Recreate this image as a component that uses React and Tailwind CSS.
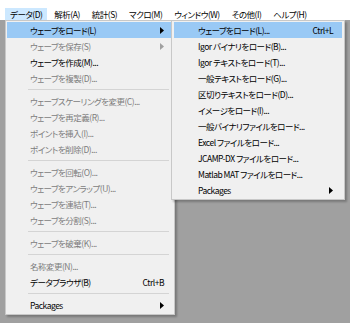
const topMenus = ['データ(D)', '解析(A)', '統計(S)', 'マクロ(M)', 'ウィンドウ(W)', 'その他(I)', 'ヘルプ(H)']

const dataMenu = [
  { label: 'ウェーブをロード(L)', arrow: true, active: true },
  { label: 'ウェーブを保存(S)', arrow: true, disabled: true },
  { label: 'ウェーブを作成(M)...' },
  { label: 'ウェーブを複製(D)...', disabled: true },
  'sep',
  { label: 'ウェーブスケーリングを変更(C)...', disabled: true },
  { label: 'ウェーブを再定義(R)...', disabled: true },
  { label: 'ポイントを挿入(I)...', disabled: true },
  { label: 'ポイントを削除(D)...', disabled: true },
  'sep',
  { label: 'ウェーブを回転(O)...', disabled: true },
  { label: 'ウェーブをアンラップ(U)...', disabled: true },
  { label: 'ウェーブを連結(T)...', disabled: true },
  { label: 'ウェーブを分割(S)...', disabled: true },
  'sep',
  { label: 'ウェーブを破棄(K)...', disabled: true },
  'sep',
  { label: '名称変更(N)...', disabled: true },
  { label: 'データブラウザ(B)', shortcut: 'Ctrl+B' },
  'sep',
  { label: 'Packages', arrow: true },
]

const loadMenu = [
  { label: 'ウェーブをロード(L)...', shortcut: 'Ctrl+L', active: true },
  { label: 'Igor バイナリをロード(B)...' },
  { label: 'Igor テキストをロード(T)...' },
  { label: '一般テキストをロード(G)...' },
  { label: '区切りテキストをロード(D)...' },
  { label: 'イメージをロード(I)...' },
  { label: '一般バイナリファイルをロード...' },
  { label: 'Excel ファイルをロード...' },
  { label: 'JCAMP-DX ファイルをロード...' },
  { label: 'Matlab MAT ファイルをロード...' },
  { label: 'Packages', arrow: true },
]

function Arrow({ disabled }) {
  return (
    <svg width="4" height="7" viewBox="0 0 4 7" className="shrink-0">
      <path d="M0 0 L4 3.5 L0 7 Z" fill={disabled ? '#a0a0a0' : '#000'} />
    </svg>
  )
}

function MenuList({ items, textPad, rightPad }) {
  return items.map((item, i) => {
    if (item === 'sep') {
      return (
        <div key={i} className="h-[7px] flex items-center pl-[21px] pr-[2px]">
          <div className="h-px w-full bg-[#d4d4d4]" />
        </div>
      )
    }
    return (
      <div
        key={i}
        className={`h-4 flex items-center ${item.active ? 'bg-[#99c9f5]' : ''} ${item.disabled ? 'text-[#7d7d7d]' : 'text-black'}`}
        style={{ paddingLeft: textPad, paddingRight: rightPad }}
      >
        <span className="flex-1 whitespace-nowrap">{item.label}</span>
        {item.shortcut && <span className="whitespace-nowrap">{item.shortcut}</span>}
        {item.arrow && <Arrow disabled={item.disabled} />}
      </div>
    )
  })
}

export default function App() {
  return (
    <div className="w-[350px] h-[323px] bg-[#a0a0a0] flex flex-col overflow-hidden font-['Noto_Sans_CJK_JP',sans-serif] text-[8.5px] leading-none tracking-[-0.5px] [font-feature-settings:'palt']">
      <div className="h-5 bg-white flex items-end pl-[5px] shrink-0">
        {topMenus.map((m, i) => (
          <div
            key={m}
            className={`h-3 flex items-center px-[5px] mr-[2px] ${i === 0 ? 'bg-[#cce8ff]' : ''}`}
          >
            {m}
          </div>
        ))}
      </div>
      <div className="pl-[5px]">
        <div className="relative w-[170px] bg-[#f0f0f0] border border-[#c8c8c8] py-[1px] pl-[1px] pr-[3px] shadow-[2px_2px_2px_rgba(0,0,0,0.25)]">
          <MenuList items={dataMenu} textPad={23} rightPad={7} />
          <div className="absolute left-[165px] -top-px w-[174px] bg-[#f0f0f0] border border-[#c8c8c8] py-[1px] pl-[2px] pr-[2px] shadow-[2px_2px_2px_rgba(0,0,0,0.25)]">
            <MenuList items={loadMenu} textPad={24} rightPad={9} />
          </div>
        </div>
      </div>
    </div>
  )
}
